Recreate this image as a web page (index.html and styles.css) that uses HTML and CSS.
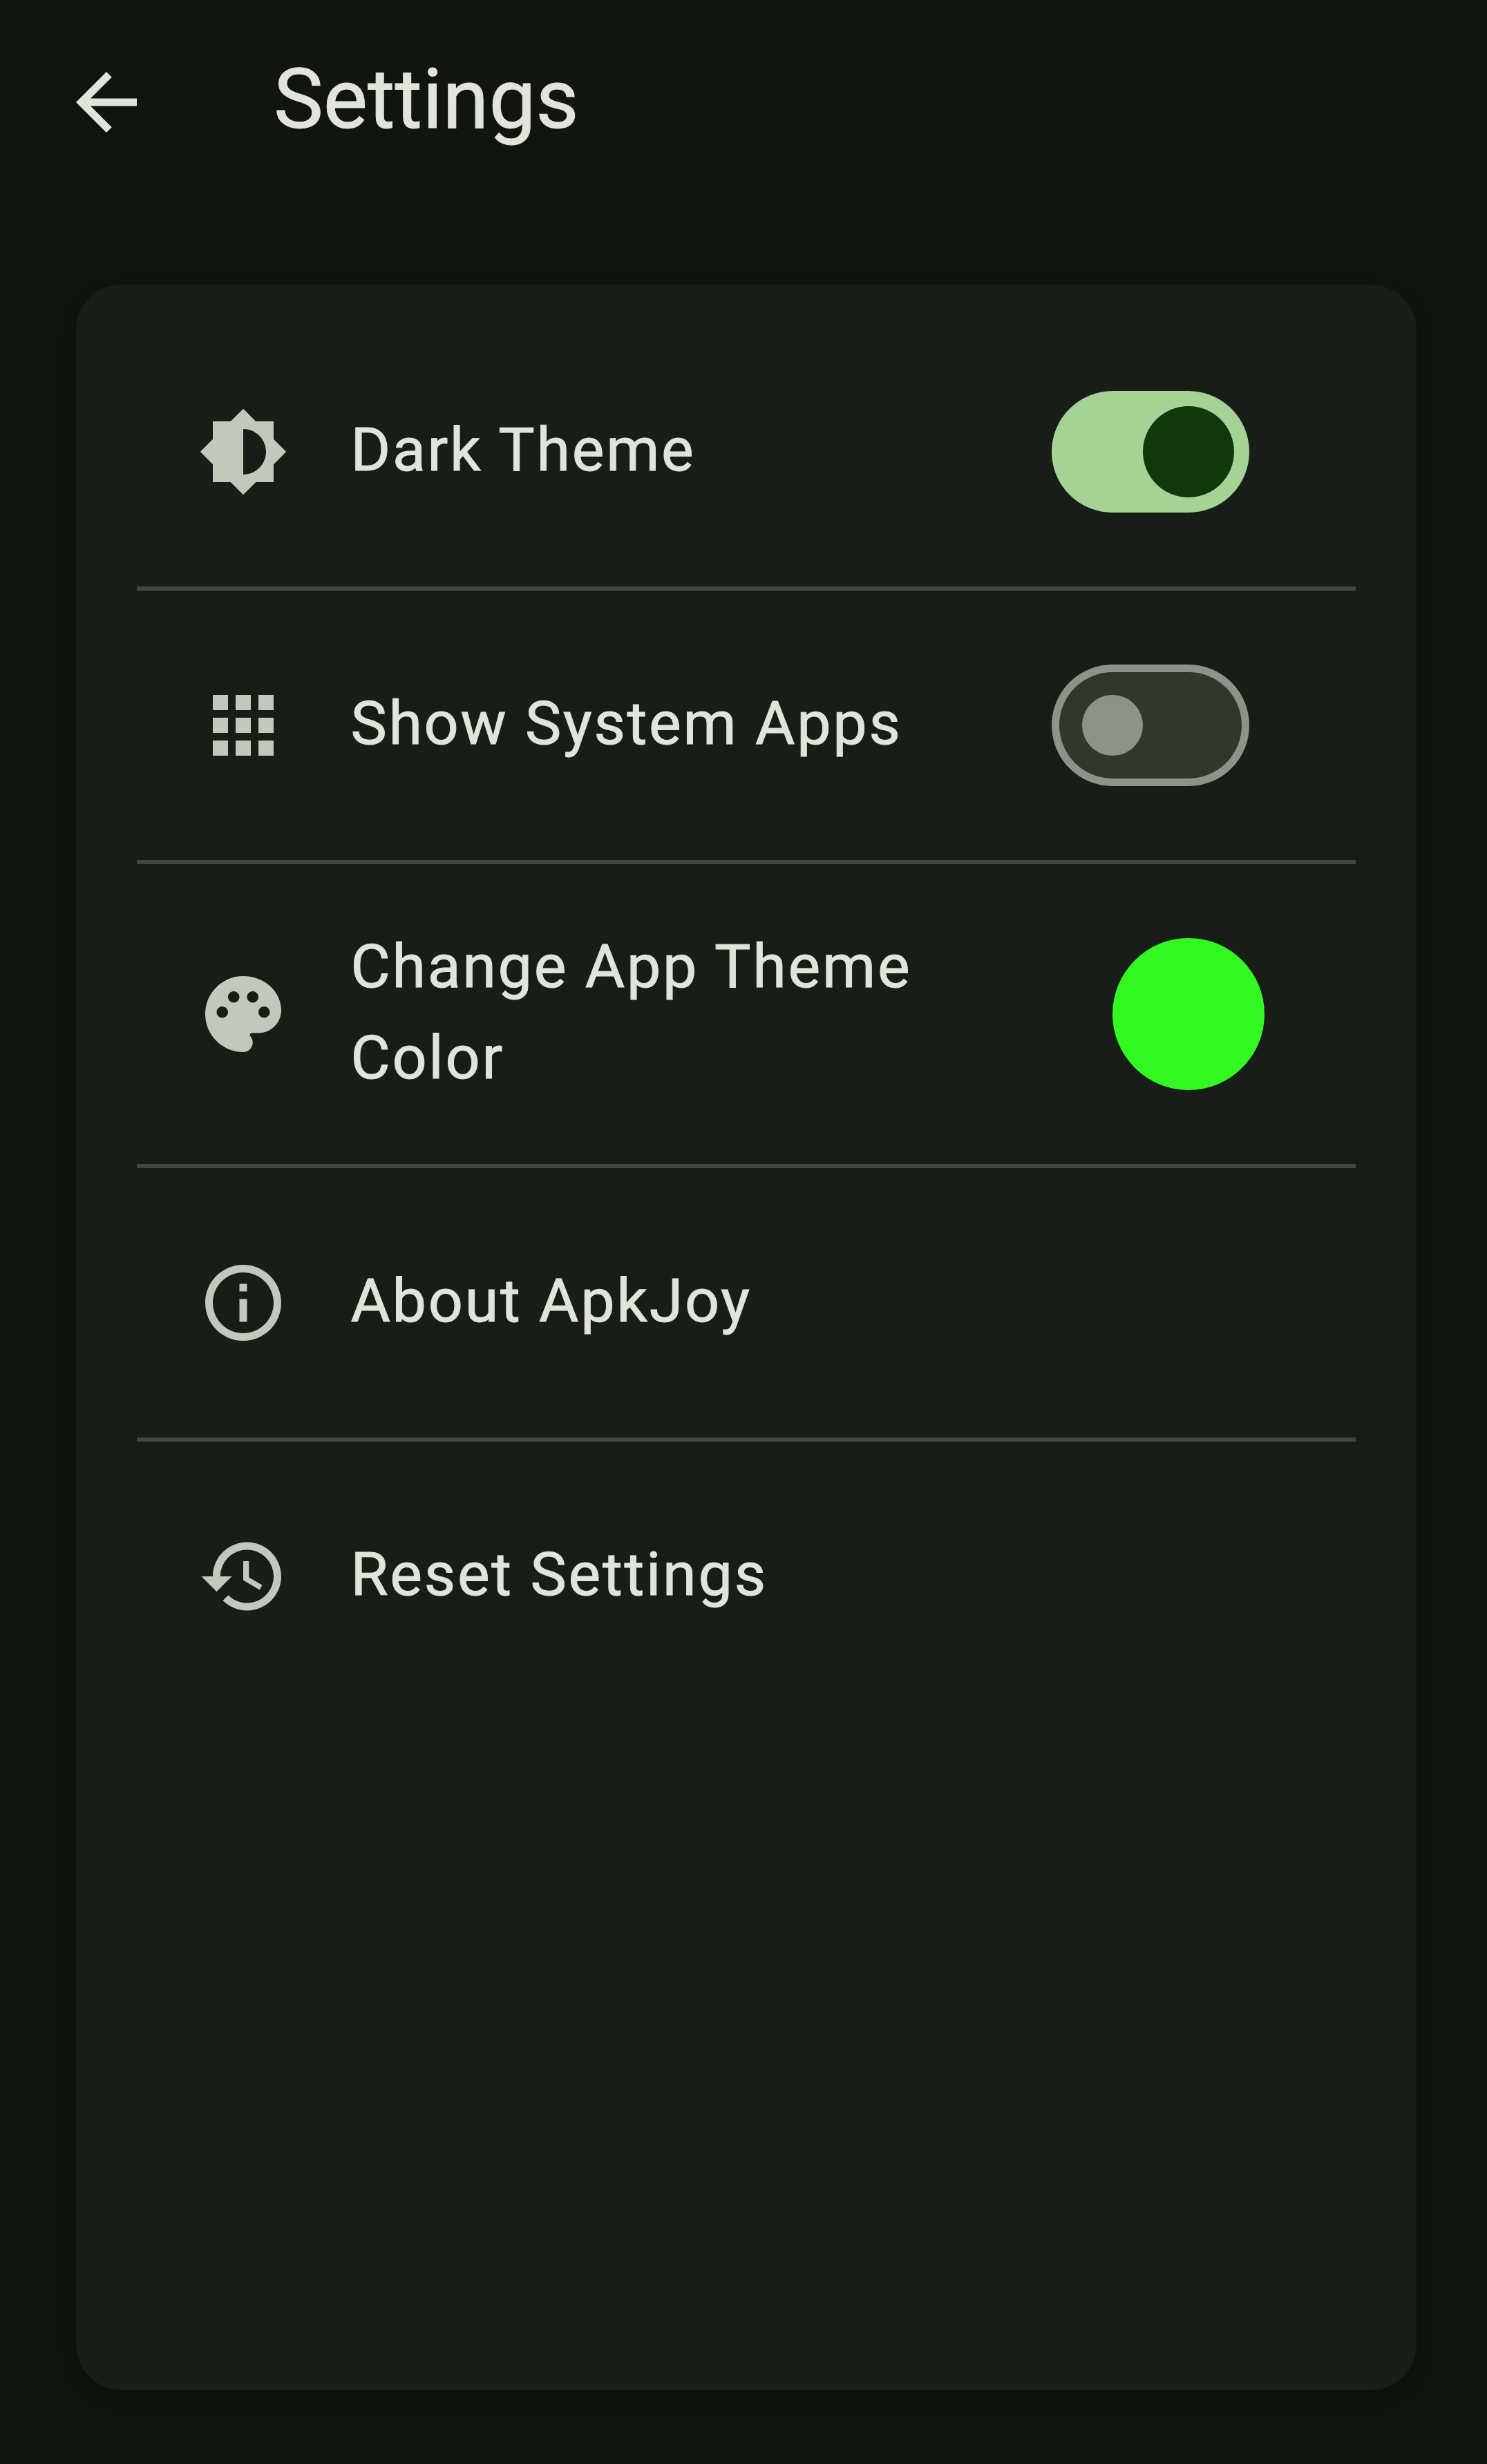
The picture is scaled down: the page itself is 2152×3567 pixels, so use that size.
FILE: index.html
```html
<!DOCTYPE html>
<html lang="en">
<head>
<meta charset="utf-8">
<title>Settings</title>
<link rel="stylesheet" href="styles.css">
</head>
<body>
<header class="app-bar">
  <svg class="icon icon-back" viewBox="0 0 24 24"><path d="M20 11H7.83l5.59-5.59L12 4l-8 8 8 8 1.41-1.41L7.83 13H20v-2z"/></svg>
  <h1 class="title">Settings</h1>
</header>
<main class="card">
  <div class="row">
    <svg class="icon" viewBox="0 0 24 24"><path d="M20 15.31L23.31 12 20 8.69V4h-4.69L12 .69 8.69 4H4v4.69L.69 12 4 15.31V20h4.69L12 23.31 15.31 20H20v-4.69zM12 18V6c3.31 0 6 2.69 6 6s-2.69 6-6 6z"/></svg>
    <span class="label">Dark Theme</span>
    <span class="switch switch-on"><span class="thumb"></span></span>
  </div>
  <div class="divider"></div>
  <div class="row">
    <svg class="icon" viewBox="0 0 24 24"><path d="M4 8h4V4H4v4zm6 12h4v-4h-4v4zm-6 0h4v-4H4v4zm0-6h4v-4H4v4zm6 0h4v-4h-4v4zm6-10v4h4V4h-4zm-6 4h4V4h-4v4zm6 6h4v-4h-4v4zm0 6h4v-4h-4v4z"/></svg>
    <span class="label">Show System Apps</span>
    <span class="switch"><span class="thumb"></span></span>
  </div>
  <div class="divider"></div>
  <div class="row row-tall">
    <svg class="icon" viewBox="0 0 24 24"><path d="M12 2C6.49 2 2 6.49 2 12s4.49 10 10 10c1.38 0 2.5-1.12 2.5-2.5 0-.61-.23-1.2-.64-1.67-.08-.1-.13-.21-.13-.33 0-.28.22-.5.5-.5H16c3.31 0 6-2.69 6-6 0-4.96-4.49-9-10-9zm5.500 11c-.83 0-1.500-.67-1.500-1.500s.67-1.500 1.500-1.500 1.500.67 1.500 1.500-.67 1.500-1.500 1.500zm-3-4c-.83 0-1.500-.67-1.500-1.500S13.670 6 14.500 6s1.500.67 1.500 1.500S15.330 9 14.500 9zM5 11.500c0-.83.67-1.500 1.500-1.500s1.500.67 1.500 1.500S7.330 13 6.500 13 5 12.330 5 11.500zm6-4c0 .83-.67 1.500-1.500 1.500S8 8.330 8 7.500 8.670 6 9.500 6s1.500.67 1.500 1.500z"/></svg>
    <span class="label">Change App Theme<br>Color</span>
    <span class="swatch"></span>
  </div>
  <div class="divider"></div>
  <div class="row">
    <svg class="icon" viewBox="0 0 24 24"><path d="M11 7h2v2h-2zm0 4h2v6h-2zm1-9C6.480 2 2 6.480 2 12s4.480 10 10 10 10-4.480 10-10S17.520 2 12 2zm0 18c-4.410 0-8-3.590-8-8s3.590-8 8-8 8 3.590 8 8-3.590 8-8 8z"/></svg>
    <span class="label">About ApkJoy</span>
  </div>
  <div class="divider"></div>
  <div class="row">
    <svg class="icon" viewBox="0 0 24 24"><path d="M13 3c-4.970 0-9 4.030-9 9H1l3.890 3.890.07.14L9 12H6c0-3.870 3.130-7 7-7s7 3.130 7 7-3.130 7-7 7c-1.930 0-3.680-.79-4.940-2.060l-1.420 1.420C8.270 19.990 10.510 21 13 21c4.970 0 9-4.030 9-9s-4.030-9-9-9zm-1 5v5l4.280 2.540.72-1.210-3.500-2.080V8H12z"/></svg>
    <span class="label">Reset Settings</span>
  </div>
</main>
</body>
</html>
```
FILE: styles.css
```css
* {
  box-sizing: border-box;
}

body {
  margin: 0;
  height: 3567px;
  display: flex;
  flex-direction: column;
  background: #11140f;
  color: #e1e4da;
  font-family: Roboto, "Liberation Sans", sans-serif;
}

.app-bar {
  display: flex;
  align-items: center;
  gap: 176px;
  height: 296px;
  padding-left: 88px;
}

.title {
  margin: 0;
  padding-bottom: 8px;
  font-size: 121px;
  font-weight: 400;
  line-height: 154px;
  -webkit-text-stroke: 1px currentColor;
}

.icon {
  flex: none;
  width: 132px;
  height: 132px;
  fill: #c3c8bc;
}

.icon-back {
  fill: #e1e4da;
}

.card {
  width: 1940px;
  height: 3048px;
  margin: 116px 0 0 110px;
  padding: 47px 88px 0;
  border-radius: 66px;
  background: #191d17;
  box-shadow: 0 10px 24px rgba(0, 0, 0, 0.25);
}

.row {
  display: flex;
  align-items: center;
  height: 390px;
  padding: 0 154px 0 88px;
}

.row-tall {
  height: 434px;
  padding-right: 132px;
}

.divider {
  height: 6px;
  background: #43483f;
}

.label {
  flex: 1;
  margin-left: 89.4px;
  padding-bottom: 6px;
  font-size: 88px;
  line-height: 132px;
  letter-spacing: 2.75px;
  white-space: nowrap;
  -webkit-text-stroke: 1px currentColor;
}

.switch {
  display: flex;
  align-items: center;
  width: 286px;
  height: 176px;
  padding-left: 33px;
  border: 11px solid #8d9387;
  border-radius: 88px;
  background: #32362f;
}

.thumb {
  width: 88px;
  height: 88px;
  border-radius: 50%;
  background: #8d9387;
}

.switch-on {
  justify-content: flex-end;
  padding: 0 11px;
  border-color: #a5d395;
  background: #a5d395;
}

.switch-on .thumb {
  width: 132px;
  height: 132px;
  background: #10380b;
}

.swatch {
  width: 220px;
  height: 220px;
  border-radius: 50%;
  background: #33f923;
}
```
